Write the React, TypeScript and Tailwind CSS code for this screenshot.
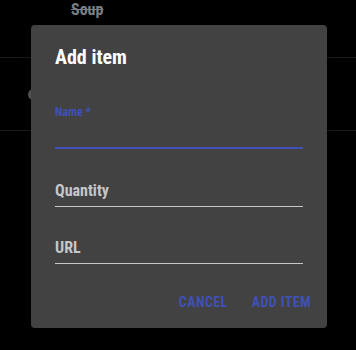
export default function App() {
  return (
    <div className="relative h-[350px] w-[356px] overflow-hidden bg-black font-['Roboto_Condensed','Roboto',sans-serif]">
      <div className="flex flex-col">
        <div className="h-[58px] border-b border-[#1c1c1c] pl-[71px] text-[16px] font-bold leading-[20px] text-[#7a7f83]">
          <span className="line-through">Soup</span>
        </div>
        <div className="flex h-[73px] items-center border-b border-[#1c1c1c] pl-[28px]">
          <div className="h-[11px] w-[11px] rounded-full bg-[#5a5a5a]" />
        </div>
      </div>

      {/* dialog */}
      <div className="absolute left-[31px] top-[25px] flex w-[296px] flex-col rounded-[4px] bg-[#424242] shadow-[0_11px_15px_-7px_rgba(0,0,0,0.2),0_24px_38px_3px_rgba(0,0,0,0.14)]">
        <div className="px-6 pt-4">
          <h2 className="text-[20px] font-bold leading-[32px] text-white">Add item</h2>
        </div>
        <div className="flex flex-col px-6 pb-[12px]">
          <div className="mt-[33px] flex flex-col">
            <label className="block text-[12px] font-bold leading-[12px] text-[#3f51b5]">Name *</label>
            <div className="h-[31px] border-b-2 border-[#3f51b5]" />
          </div>
          <div className="mt-[34px] border-b border-[#c6c6c6] pb-[7px] text-[16px] font-bold leading-[16px] text-[#c6c6c6]">
            Quantity
          </div>
          <div className="mt-[33px] border-b border-[#c6c6c6] pb-[7px] text-[16px] font-bold leading-[16px] text-[#c6c6c6]">
            URL
          </div>
        </div>
        <div className="flex justify-end gap-2 p-2">
          <button className="flex h-9 min-w-16 items-center justify-center px-2 text-[14px] font-bold uppercase leading-[24px] tracking-[0.4px] text-[#3f51b5]">
            Cancel
          </button>
          <button className="flex h-9 min-w-16 items-center justify-center px-2 text-[14px] font-bold uppercase leading-[24px] tracking-[0.4px] text-[#3f51b5]">
            Add item
          </button>
        </div>
      </div>
    </div>
  );
}
